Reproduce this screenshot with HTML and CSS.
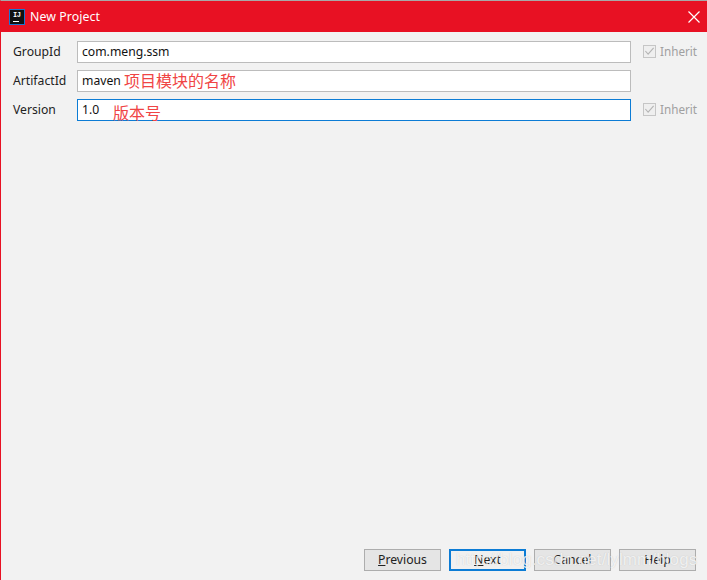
FILE: index.html
```html
<!DOCTYPE html>
<html lang="zh">
<head>
<meta charset="utf-8">
<title>New Project</title>
<link rel="stylesheet" href="styles.css">
</head>
<body>
<div class="window">
  <header class="titlebar">
    <div class="app-icon"><span class="app-icon-text">IJ</span><span class="app-icon-bar"></span></div>
    <span class="title">New Project</span>
    <svg class="close" width="12" height="12" viewBox="0 0 12 12"><path d="M.5.5l11 11M11.5.5l-11 11" stroke="#fff" stroke-width="1.2" fill="none"/></svg>
  </header>
  <main class="form">
    <label class="label">GroupId</label>
    <div class="field">com.meng.ssm</div>
    <div class="inherit">
      <span class="check"><svg width="12" height="12" viewBox="0 0 12 12"><path d="M1.5 6l3 3.5 6-7" stroke="#b4b4b4" stroke-width="1.2" fill="none"/></svg></span>
      <span>Inherit</span>
    </div>
    <label class="label">ArtifactId</label>
    <div class="field"><span>maven</span><span class="note note-artifact">项目模块的名称</span></div>
    <div></div>
    <label class="label">Version</label>
    <div class="field field-focus"><span>1.0</span><span class="note note-version">版本号</span></div>
    <div class="inherit">
      <span class="check"><svg width="12" height="12" viewBox="0 0 12 12"><path d="M1.5 6l3 3.5 6-7" stroke="#b4b4b4" stroke-width="1.2" fill="none"/></svg></span>
      <span>Inherit</span>
    </div>
  </main>
  <footer class="buttons">
    <div class="btn"><span><u>P</u>revious</span></div>
    <div class="btn btn-primary"><span><u>N</u>ext</span></div>
    <div class="btn">Cancel</div>
    <div class="btn">Help</div>
  </footer>
  <div class="watermark">http://blog.csdn.net/lylmm/blogs</div>
</div>
</body>
</html>
```
FILE: styles.css
```css
* { box-sizing: border-box; }
html, body { margin: 0; padding: 0; }
body { width: 707px; height: 580px; overflow: hidden; font-family: "Noto Sans", "Noto Sans CJK SC", sans-serif; font-size: 12.2px; color: #222; }
.window { position: relative; width: 707px; height: 580px; display: flex; flex-direction: column; background: #f2f2f2; border-top: 1px solid #a8a8a8; border-left: 1px solid #e81123; }
.titlebar { height: 31px; margin-left: -1px; flex: none; background: #e81123; display: flex; align-items: center; padding: 0 7px 0 10px; color: #fff; }
.app-icon { width: 14px; height: 14px; background: #111; outline: 1px solid #1976d2; position: relative; flex: none; display: flex; flex-direction: column; align-items: flex-start; padding: 1px 0 0 3px; }
.app-icon-text { font: bold 7px/8px "Liberation Mono", monospace; color: #fff; letter-spacing: -0.5px; }
.app-icon-bar { width: 6px; height: 1px; background: #fff; margin-top: 2px; }
.title { margin-left: 6px; font-size: 12.3px; letter-spacing: 0.1px; }
.close { margin-left: auto; }
.form { display: grid; grid-template-columns: 76px 554px 1fr; grid-auto-rows: 22px; row-gap: 7px; align-items: center; padding-top: 9px; flex: 1; align-content: start; }
.label { padding-left: 12px; padding-bottom: 2px; font-size: 12.2px; color: #222; }
.field { position: relative; height: 22px; background: #fff; border: 1px solid #bcbcbc; padding-left: 4px; line-height: 19px; font-size: 12.2px; color: #111; }
.field-focus { border-color: #0c7cd5; }
.note { position: absolute; color: #f04545; font-size: 16px; line-height: 20px; white-space: nowrap; }
.note-artifact { left: 46px; top: 0; }
.note-version { left: 35px; top: 3px; }
.inherit { display: flex; align-items: center; gap: 4px; padding-left: 12px; padding-bottom: 2px; color: #a0a0a0; font-size: 11.7px; }
.check { width: 13px; height: 13px; border: 1px solid #c6c6c6; background: #efefef; display: flex; align-items: center; justify-content: center; }
.buttons { display: flex; gap: 8px; justify-content: flex-end; padding: 0 11px 9px 0; flex: none; }
.btn { width: 77px; height: 22px; border: 1px solid #adadad; background: #e5e5e5; font-size: 12.2px; line-height: 19px; text-align: center; color: #222; }
.btn-primary { border: 2px solid #0c7cd5; background: #f0f0f0; line-height: 17px; }
.watermark { position: absolute; left: 455px; top: 548px; font-family: "Liberation Sans", sans-serif; font-size: 17px; line-height: 22px; color: rgba(255,255,255,0.75); text-shadow: 0 0 1px rgba(120,120,120,0.35); letter-spacing: 0.1px; white-space: nowrap; }
```
